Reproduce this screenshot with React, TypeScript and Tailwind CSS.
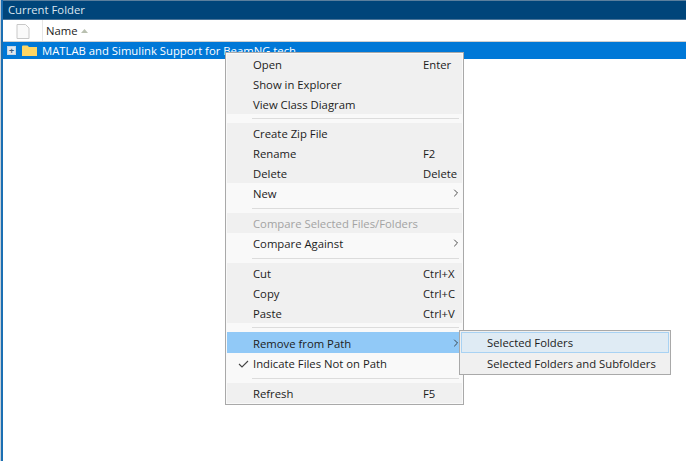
import { ChevronRight } from "lucide-react";

type Item = {
  label: string;
  hint?: string;
  sub?: boolean;
  check?: boolean;
  disabled?: boolean;
  active?: boolean;
  light?: boolean;
};

// gap is the height of the separator above the group
const groups: { gap: string; items: Item[] }[] = [
  {
    gap: "h-0",
    items: [
      { label: "Open", hint: "Enter" },
      { label: "Show in Explorer" },
      { label: "View Class Diagram" },
    ],
  },
  {
    gap: "h-[9px]",
    items: [
      { label: "Create Zip File" },
      { label: "Rename", hint: "F2" },
      { label: "Delete", hint: "Delete" },
      { label: "New", sub: true, light: true },
    ],
  },
  {
    gap: "h-[10px]",
    items: [
      { label: "Compare Selected Files/Folders", disabled: true },
      { label: "Compare Against", sub: true, light: true },
    ],
  },
  {
    gap: "h-[10px]",
    items: [
      { label: "Cut", hint: "Ctrl+X" },
      { label: "Copy", hint: "Ctrl+C" },
      { label: "Paste", hint: "Ctrl+V" },
    ],
  },
  {
    gap: "h-[9px]",
    items: [
      { label: "Remove from Path", sub: true, active: true },
      { label: "Indicate Files Not on Path", check: true, light: true },
    ],
  },
  { gap: "h-[10px]", items: [{ label: "Refresh", hint: "F5" }] },
];

function MenuRow({ item }: { item: Item }) {
  const bg = item.active ? "h-[21px] bg-[#91c9f7]" : item.light ? "h-5 bg-[#f9f9f9]" : "h-5 bg-[#f0f0f0]";
  const color = item.disabled ? "text-[#a3a3a3]" : "text-[#1c1c1c]";
  return (
    <div className={`relative flex items-center pt-[3px] pl-[26px] ${bg} ${color}`}>
      {item.check && (
        <svg className="absolute left-[11px] top-[7px]" width="11" height="8" viewBox="0 0 11 8" fill="none">
          <path d="M1 4 L4 7 L10 1" stroke="#444" strokeWidth="1.1" />
        </svg>
      )}
      <span className="flex-1">{item.label}</span>
      {item.hint && <span className="w-[39px]">{item.hint}</span>}
      {item.sub && <ChevronRight className="-mt-[3px] h-3 w-3 text-[#222]" strokeWidth={1.6} />}
    </div>
  );
}

function ContextMenu() {
  return (
    <div className="absolute left-[225px] top-[52px] w-[239px] border border-[#a9a9a9] bg-[#f9f9f9] px-px pt-px pb-px">
      {groups.map((group, i) => (
        <div key={i}>
          <div className={`flex items-center pl-[25px] pr-[3px] ${group.gap}`}>
            {i > 0 && <div className="h-px w-full bg-[#dcdcdc]" />}
          </div>
          {group.items.map((item) => (
            <MenuRow key={item.label} item={item} />
          ))}
        </div>
      ))}
    </div>
  );
}

function SubMenu() {
  return (
    <div className="absolute left-[459px] top-[330px] w-[212px] border border-[#a9a9a9] bg-[#f0f0f0] p-px text-[#1c1c1c]">
      <div className="flex h-[21px] items-center border border-[#a8d2f3] bg-[#dfebf4] pt-[2px] pl-[25px]">Selected Folders</div>
      <div className="flex h-5 items-center pt-[2px] pl-[26px]">Selected Folders and Subfolders</div>
    </div>
  );
}

export default function App() {
  return (
    <div className="relative h-[461px] w-[686px] overflow-hidden bg-white font-['Open_Sans','Noto_Sans',sans-serif] text-[11.3px]">
      <div className="h-full border-l border-[#c5ced6]">
        <div className="h-full border-l-2 border-[#1b6fb3]">
          <div className="flex h-[20px] items-center border-y border-t-[#5b7f9d] border-b-[#4a7397] bg-[#00457a] pl-[5px] text-[#dbe6ef]">
            Current Folder
          </div>
          <div className="flex h-[22px] items-center border-b border-[#cfcfcf] bg-white">
            <div className="flex h-full w-[40px] items-center justify-center border-r border-[#e6e6e6] pt-[2px] pl-[1px]">
              <svg width="14" height="15" viewBox="0 0 14 15" fill="none">
                <path d="M1 .5H9.5L13 4V14.5H1Z" fill="#fafafa" stroke="#c8c8c8" />
              </svg>
            </div>
            <span className="ml-[3px] pt-[2px] text-[#222]">Name</span>
            <svg className="ml-[3px]" width="7" height="4" viewBox="0 0 7 4">
              <path d="M0 4 L3.5 0 L7 4Z" fill="#b9c0b0" />
            </svg>
          </div>
          <div className="flex h-[17px] items-center bg-[#0078d7] text-white">
            <div className="ml-[4px] flex h-[9px] w-[9px] items-center justify-center border border-[#c8d6e2] bg-[#dfe8f0]">
              <span className="text-[9px] leading-none font-bold text-[#3a5a7a]">+</span>
            </div>
            <svg className="ml-[6px]" width="15" height="11" viewBox="0 0 15 11">
              <path d="M0 1.5 Q0 .5 1 .5H5.5L7 2H15V11H0Z" fill="#ffd664" />
            </svg>
            <span className="ml-[5px] whitespace-nowrap pt-[2px]">MATLAB and Simulink Support for BeamNG.tech</span>
          </div>
        </div>
      </div>
      <ContextMenu />
      <SubMenu />
    </div>
  );
}
